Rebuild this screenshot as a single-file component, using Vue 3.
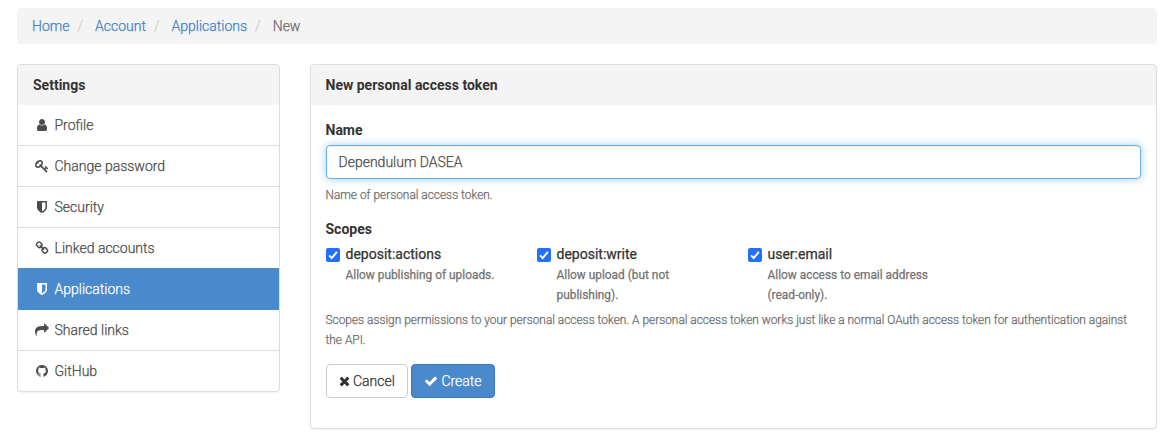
<script setup>
import { ref } from 'vue'

const crumbs = ['Home', 'Account', 'Applications']

const icons = {
  user: 'M1536 1399q0 109-62.5 187t-150.5 78h-854q-88 0-150.5-78t-62.5-187q0-85 8.5-160.5t31.5-152 58.5-131 94-89 134.5-34.5q131 128 313 128t313-128q76 0 134.5 34.5t94 89 58.5 131 31.5 152 8.5 160.5zm-256-887q0 159-112.5 271.5t-271.5 112.5-271.5-112.5-112.5-271.5 112.5-271.5 271.5-112.5 271.5 112.5 112.5 271.5z',
  key: 'M832 512q0-80-56-136t-136-56-136 56-56 136q0 42 19 83-41-19-83-19-80 0-136 56t-56 136 56 136 136 56 136-56 56-136q0-42-19-83 41 19 83 19 80 0 136-56t56-136zm851 704q0 17-49 66t-66 49q-9 0-28.5-16t-36.5-33-38.5-40-24.5-26l-96 96 220 220q28 28 28 68 0 42-39 81t-81 39q-40 0-68-28l-671-671q-176 131-365 131-163 0-265.5-102.5t-102.5-265.5q0-160 95-313t248-248 313-95q163 0 265.5 102.5t102.5 265.5q0 189-131 365l355 355 96-96q-3-3-26-24.5t-40-38.5-33-36.5-16-28.5q0-17 49-66t66-49q13 0 23 10 6 6 46 44.5t82 79.5 86.5 86 73 78 28.5 41z',
  shield: 'M1344 960v-640h-448v1137q119-63 213-137 235-184 235-360zm192-768v768q0 86-33.5 170.5t-83 150-118 127.5-126.5 103-121 77.5-89.5 49.5-42.5 20q-12 6-26 6t-26-6q-16-7-42.5-20t-89.5-49.5-121-77.5-126.5-103-118-127.5-83-150-33.5-170.5v-768q0-26 19-45t45-19h1152q26 0 45 19t19 45z',
  link: 'M1520 1216q0-40-28-68l-208-208q-28-28-68-28-42 0-72 32 3 3 19 18.5t21.5 21.5 15 19 13 25.5 3.5 27.5q0 40-28 68t-68 28q-15 0-27.5-3.5t-25.5-13-19-15-21.5-21.5-18.5-19q-33 31-33 73 0 40 28 68l206 207q27 27 68 27 40 0 68-26l147-146q28-28 28-67zm-703-705q0-40-28-68l-206-207q-28-28-68-28-39 0-68 27l-147 146q-28 28-28 67 0 40 28 68l208 208q27 27 68 27 42 0 72-31-3-3-19-18.5t-21.5-21.5-15-19-13-25.5-3.5-27.5q0-40 28-68t68-28q15 0 27.5 3.5t25.5 13 19 15 21.5 21.5 18.5 19q33-31 33-73zm895 705q0 120-85 203l-147 146q-83 83-203 83-121 0-204-85l-206-207q-83-83-83-203 0-123 88-209l-88-88q-86 88-208 88-120 0-204-84l-208-208q-84-84-84-204t85-203l147-146q83-83 203-83 121 0 204 85l206 207q83 83 83 203 0 123-88 209l88 88q86-88 208-88 120 0 204 84l208 208q84 84 84 204z',
  share: 'M1792 640q0 26-19 45l-512 512q-19 19-45 19t-45-19-19-45v-256h-224q-98 0-175.5 6t-154 21.5-133 42.5-105.5 69.5-80 101-48.5 138.5-17.5 181q0 55 5 123 0 6 2.5 23.5t2.5 26.5q0 15-8.5 25t-23.5 10q-16 0-28-17-7-9-13-22t-13.5-30-10.5-24q-127-285-127-451 0-199 53-333 162-403 875-403h224v-256q0-26 19-45t45-19 45 19l512 512q19 19 19 45z',
  github: 'M896 128q209 0 385.5 103t279.5 279.5 103 385.5q0 251-146.5 451.5t-378.5 277.5q-27 5-40-7t-13-30q0-3 .5-76.5t.5-134.5q0-97-52-142 57-6 102.5-18t94-39 81-66.5 53-105 20.5-150.5q0-119-79-206 37-91-8-204-28-9-81 11t-92 44l-38 24q-93-26-192-26t-192 26q-16-11-42.5-27t-83.5-38.5-85-13.5q-45 113-8 204-79 87-79 206 0 85 20.5 150t52.5 105 80.5 67 94 39 102.5 18q-39 36-49 103-21 10-45 15t-57 5-65.5-21.5-55.5-62.5q-19-32-48.5-52t-49.5-24l-20-3q-21 0-29 4.5t-5 11.5 9 14 13 12l7 5q22 10 43.5 38t31.5 51l10 23q13 38 44 61.5t67 30 69.5 7 55.5-3.5l23-4q0 38 .5 88.5t.5 54.5q0 18-13 30t-40 7q-232-77-378.5-277.5t-146.5-451.5q0-209 103-385.5t279.5-279.5 385.5-103z',
  times: 'M1490 1322q0 40-28 68l-136 136q-28 28-68 28t-68-28l-294-294-294 294q-28 28-68 28t-68-28l-136-136q-28-28-28-68t28-68l294-294-294-294q-28-28-28-68t28-68l136-136q28-28 68-28t68 28l294 294 294-294q28-28 68-28t68 28l136 136q28 28 28 68t-28 68l-294 294 294 294q28 28 28 68z',
  check: 'M1671 566q0 40-28 68l-724 724-136 136q-28 28-68 28t-68-28l-136-136-362-362q-28-28-28-68t28-68l136-136q28-28 68-28t68 28l294 295 656-657q28-28 68-28t68 28l136 136q28 28 28 68z',
}

const menu = [
  { label: 'Profile', icon: 'user' },
  { label: 'Change password', icon: 'key' },
  { label: 'Security', icon: 'shield' },
  { label: 'Linked accounts', icon: 'link' },
  { label: 'Applications', icon: 'shield', active: true },
  { label: 'Shared links', icon: 'share' },
  { label: 'GitHub', icon: 'github' },
]

const name = ref('Dependulum DASEA')
const scopes = ref([
  { id: 'deposit:actions', text: 'Allow publishing of uploads.', on: true },
  { id: 'deposit:write', text: 'Allow upload (but not publishing).', on: true },
  { id: 'user:email', text: 'Allow access to email address (read-only).', on: true },
])
</script>

<template>
  <div class="page">
    <nav class="breadcrumb">
      <template v-for="c in crumbs" :key="c">
        <a class="crumb">{{ c }}</a><span class="sep">/</span>
      </template>
      <span class="current">New</span>
    </nav>

    <div class="columns">
      <aside class="panel sidebar">
        <div class="heading">Settings</div>
        <a v-for="m in menu" :key="m.label" class="item" :class="{ active: m.active }">
          <span class="fw"><svg class="icon" viewBox="0 0 1792 1792"><path :d="icons[m.icon]" /></svg></span>
          <span>{{ m.label }}</span>
        </a>
      </aside>

      <main class="panel content">
        <div class="heading">New personal access token</div>
        <form class="body" @submit.prevent>
          <label class="label" for="token-name">Name</label>
          <input id="token-name" v-model="name" class="field" type="text" />
          <p class="help name-help">Name of personal access token.</p>

          <div class="label scopes-label">Scopes</div>
          <div class="scopes">
            <label v-for="s in scopes" :key="s.id" class="scope">
              <input v-model="s.on" type="checkbox" class="native" />
              <span class="box"><svg v-if="s.on" viewBox="0 0 14 14"><path d="M3.1 7.4 5.7 10.1 10.9 3.9" /></svg></span>
              <span class="scope-text">
                <span class="scope-id">{{ s.id }}</span>
                <span class="scope-desc">{{ s.text }}</span>
              </span>
            </label>
          </div>
          <p class="help">Scopes assign permissions to your personal access token. A personal access token works just like a normal OAuth access token for authentication against the API.</p>

          <div class="actions">
            <button type="button" class="btn"><svg class="icon times" viewBox="0 0 1408 1792"><path transform="translate(-192 0)" :d="icons.times" /></svg><span>Cancel</span></button>
            <button type="submit" class="btn primary"><svg class="icon" viewBox="0 0 1792 1792"><path :d="icons.check" /></svg><span>Create</span></button>
          </div>
        </form>
      </main>
    </div>
  </div>
</template>

<style>
body {
  background: #fff;
  overflow: hidden;
}
</style>

<style scoped>
.page,
.page * {
  box-sizing: border-box;
}
.page {
  padding: 8px 18px 10px 17px;
  font: 300 14px/20px Roboto, "Liberation Sans", sans-serif;
  -webkit-text-stroke: 0.25px currentColor;
  color: #333;
}
.breadcrumb {
  display: flex;
  height: 36px;
  padding: 8px 15px;
  border-radius: 4px;
  background: #f4f4f4;
  color: #6c6c6c;
}
.crumb {
  color: #4183cb;
}
.sep {
  padding: 0 12px 0 8px;
  color: #ccc;
}
.columns {
  display: flex;
  align-items: flex-start;
  gap: 30px;
  margin-top: 20px;
}
.panel {
  border: 1px solid #ddd;
  border-radius: 4px;
  background: #fff;
  box-shadow: 0 1px 1px rgba(0, 0, 0, 0.05);
  overflow: hidden;
}
.sidebar {
  width: 263px;
}
.content {
  flex: 1;
  height: 365px;
}
.heading {
  height: 40px;
  padding: 10px 15px;
  background: #f4f4f4;
  font-weight: 700;
  -webkit-text-stroke-width: 0;
}
.content .heading {
  padding-left: 14.5px;
}
.item {
  display: flex;
  gap: 3.5px;
  height: 41px;
  padding: 10px 15px;
  border-bottom: 1px solid #ddd;
  color: #4d4d4d;
}
.item:last-child {
  height: 40px;
  border-bottom: 0;
}
.item.active {
  height: 42px;
  margin-top: -1px;
  padding-top: 11px;
  background: #4a89cc;
  border-color: #4a89cc;
  color: #fff;
}
.fw {
  display: flex;
  justify-content: center;
  align-items: center;
  width: 18px;
}
.icon {
  display: block;
  width: 14px;
  height: 14px;
  fill: currentColor;
}
.body {
  padding: 15px 15px 15px 14.5px;
}
.label {
  display: block;
  height: 20px;
  font-weight: 700;
  -webkit-text-stroke-width: 0;
}
.field {
  display: block;
  width: 100%;
  height: 34px;
  margin-top: 5px;
  padding: 6px 12px;
  border: 1px solid #66afe9;
  border-radius: 4px;
  outline: 0;
  background: #fff;
  box-shadow: inset 0 1px 1px rgba(0, 0, 0, 0.075), 0 0 8px rgba(102, 175, 233, 0.6);
  color: #4d4d4d;
  font: inherit;
}
.help {
  margin: 0;
  color: #6c6c6c;
  font-size: 11.9px;
}
.name-help {
  margin-top: 6px;
}
.scopes-label {
  margin-top: 14px;
}
.scopes {
  display: grid;
  grid-template-columns: repeat(3, 211px);
  margin: 5px 0;
}
.scope {
  position: relative;
  display: flex;
  gap: 6px;
}
.native {
  position: absolute;
  width: 14px;
  height: 14px;
  margin: 3px 0;
  opacity: 0;
}
.box {
  flex: none;
  width: 14px;
  height: 14px;
  margin-top: 4px;
  border-radius: 2px;
  background: #2370fb;
}
.box svg {
  display: block;
  fill: none;
  stroke: #fff;
  stroke-width: 2;
}
.scope-text {
  width: 170px;
}
.scope-id,
.scope-desc {
  display: block;
}
.scope-id {
  height: 21px;
  font-weight: 400;
}
.scope-desc {
  color: #737373;
  font-size: 11.9px;
  font-weight: 400;
}
.actions {
  display: flex;
  gap: 3px;
  margin-top: 14px;
}
.btn {
  display: flex;
  align-items: center;
  gap: 3.5px;
  height: 34px;
  padding: 6px 12px;
  border: 1px solid #ccc;
  border-radius: 4px;
  background: #fff;
  color: #333;
  font: inherit;
}
.times {
  width: 11px;
}
.primary {
  border-color: #3a7bc0;
  background: #4a89cc;
  color: #fff;
}
</style>
